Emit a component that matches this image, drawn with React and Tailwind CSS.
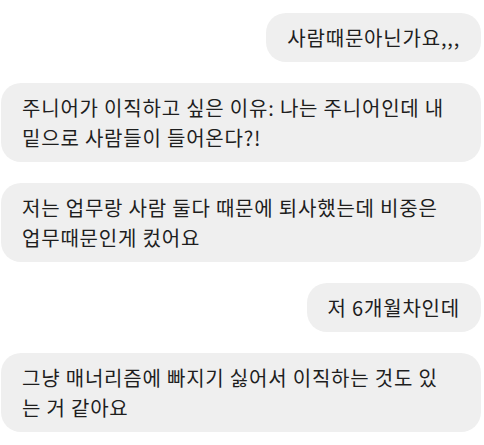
export default function App() {
  const msgs = [
    { me: true, lines: ["사람때문아닌가요,,,"] },
    { me: false, lines: ["주니어가 이직하고 싶은 이유: 나는 주니어인데 내", "밑으로 사람들이 들어온다?!"] },
    { me: false, lines: ["저는 업무랑 사람 둘다 때문에 퇴사했는데 비중은", "업무때문인게 컸어요"] },
    { me: true, lines: ["저 6개월차인데"] },
    { me: false, lines: ["그냥 매너리즘에 빠지기 싫어서 이직하는 것도 있", "는 거 같아요"] },
  ];
  return (
    <div
      className="w-[484px] h-[445px] bg-white pt-[13px] pl-[1px] pr-[3px] flex flex-col gap-[21px] text-[#1e1e1e]"
      style={{ fontFamily: '"Noto Sans CJK KR", "Noto Sans", sans-serif' }}
    >
      {msgs.map((m, i) => (
        <div key={i} className={m.me ? "flex justify-end" : "flex justify-start"}>
          <div
            className={
              m.me
                ? "bg-[#efefef] rounded-[20px] px-[21px] pt-[10px] pb-[9px] text-[20px] leading-[30px] tracking-[0.8px] whitespace-nowrap"
                : "bg-[#efefef] rounded-[20px] px-[21px] pt-[10px] pb-[9px] text-[20px] leading-[30px] tracking-[0.8px] whitespace-nowrap w-full"
            }
          >
            {m.lines.map((l, j) => (
              <div key={j}>{l}</div>
            ))}
          </div>
        </div>
      ))}
    </div>
  );
}
